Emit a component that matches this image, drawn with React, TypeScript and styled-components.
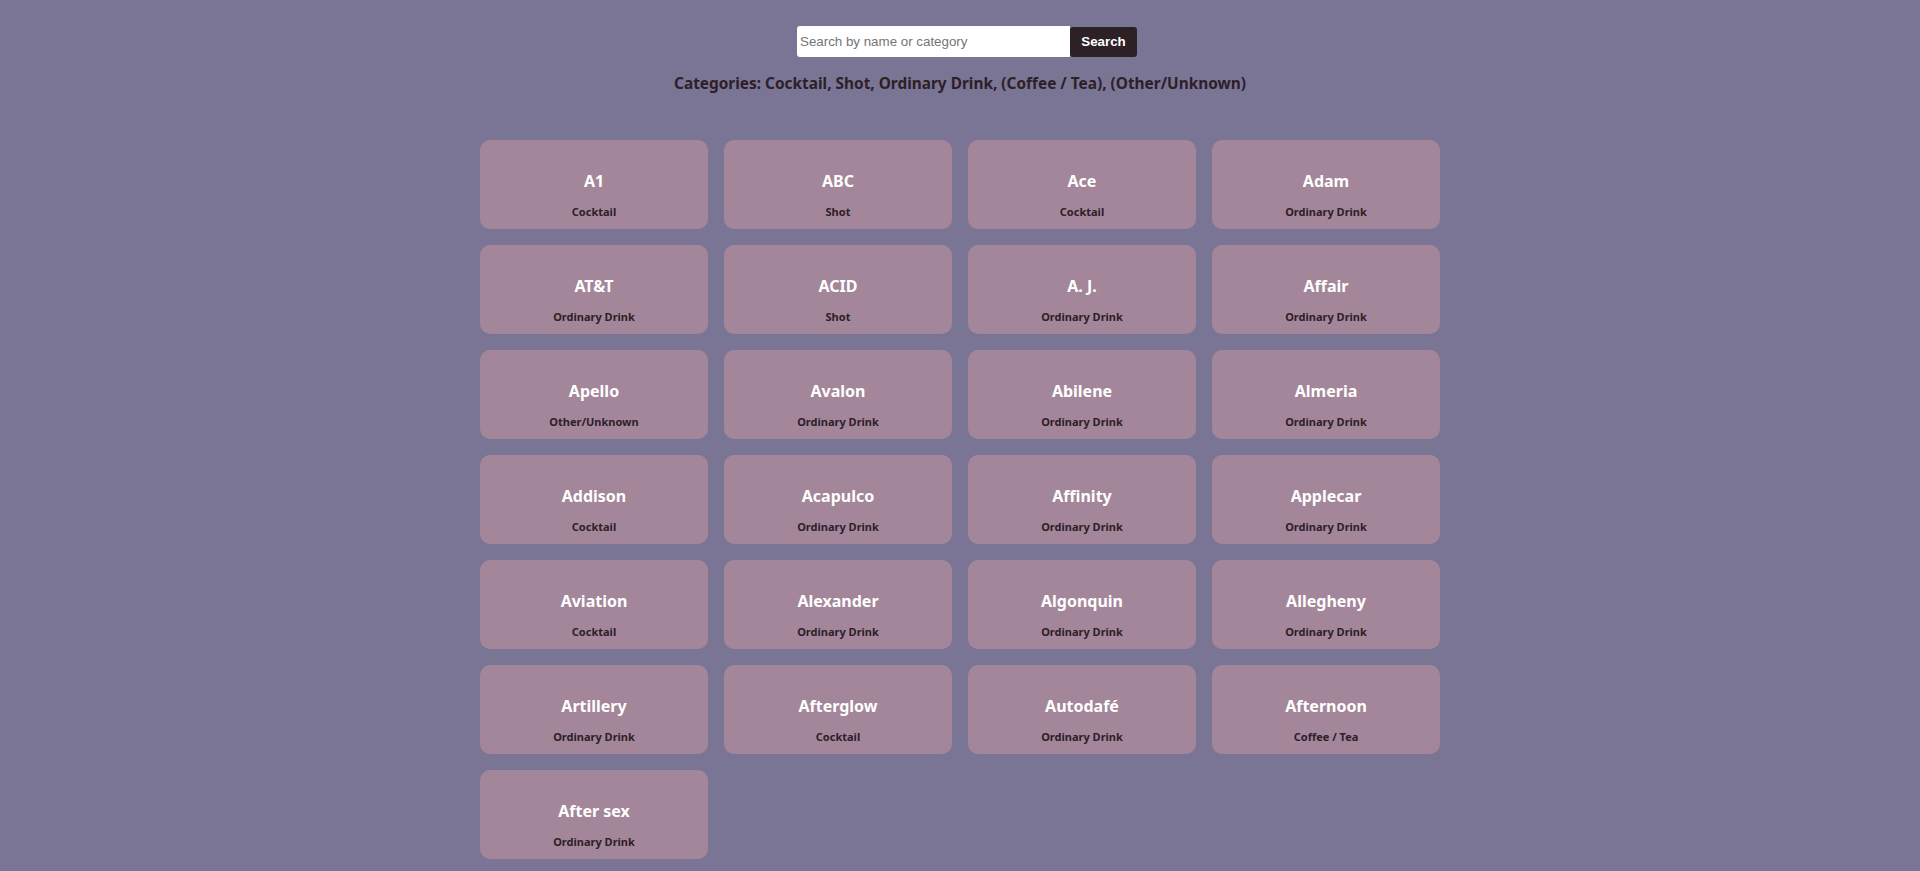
import React from "react";
import styled, { createGlobalStyle } from "styled-components";

const Global = createGlobalStyle`
  html, body { margin: 0; padding: 0; background: #7a7594; }
  body { font-family: "Noto Sans", "Open Sans", sans-serif; }
`;

const Page = styled.div`
  min-height: 871px;
  background: #7a7594;
  display: flex;
  flex-direction: column;
  align-items: center;
  padding-top: 26px;
  box-sizing: border-box;
`;

const SearchForm = styled.form`
  display: flex;
  align-items: center;
  margin-left: 14px;
`;

const SearchInput = styled.input`
  width: 273px;
  height: 31px;
  box-sizing: border-box;
  border: none;
  border-radius: 3px 0 0 3px;
  padding: 0 3px;
  font-family: "Liberation Sans", Arial, sans-serif;
  font-size: 13.33px;
  color: #222;
  background: #fff;
  outline: none;
  &::placeholder { color: #757575; }
`;

const SearchButton = styled.button`
  width: 67px;
  height: 30px;
  border: none;
  border-radius: 3px;
  background: #2e2126;
  color: #fff;
  font-family: "Liberation Sans", Arial, sans-serif;
  font-weight: 700;
  font-size: 13.33px;
  cursor: pointer;
`;

const Categories = styled.h2`
  margin: 16px 0 0;
  font-size: 15.4px;
  line-height: 22px;
  font-weight: 700;
  color: #2d2028;
`;

const Grid = styled.div`
  margin-top: 45px;
  width: 960px;
  display: grid;
  grid-template-columns: repeat(4, 228px);
  column-gap: 16px;
  row-gap: 16px;
  padding-bottom: 20px;
`;

const Card = styled.div`
  background: #a38699;
  border-radius: 10px;
  padding: 30px 10px 9px;
  height: 89px;
  box-sizing: border-box;
  display: flex;
  flex-direction: column;
  align-items: center;
`;

const Name = styled.h3`
  margin: 0 0 12px;
  font-size: 16px;
  line-height: 22px;
  font-weight: 700;
  color: #ffffff;
`;

const Category = styled.p`
  margin: 0;
  font-size: 11px;
  line-height: 16px;
  font-weight: 700;
  color: #2d2028;
`;

const drinks: [string, string][] = [
  ["A1", "Cocktail"],
  ["ABC", "Shot"],
  ["Ace", "Cocktail"],
  ["Adam", "Ordinary Drink"],
  ["AT&T", "Ordinary Drink"],
  ["ACID", "Shot"],
  ["A. J.", "Ordinary Drink"],
  ["Affair", "Ordinary Drink"],
  ["Apello", "Other/Unknown"],
  ["Avalon", "Ordinary Drink"],
  ["Abilene", "Ordinary Drink"],
  ["Almeria", "Ordinary Drink"],
  ["Addison", "Cocktail"],
  ["Acapulco", "Ordinary Drink"],
  ["Affinity", "Ordinary Drink"],
  ["Applecar", "Ordinary Drink"],
  ["Aviation", "Cocktail"],
  ["Alexander", "Ordinary Drink"],
  ["Algonquin", "Ordinary Drink"],
  ["Allegheny", "Ordinary Drink"],
  ["Artillery", "Ordinary Drink"],
  ["Afterglow", "Cocktail"],
  ["Autodafé", "Ordinary Drink"],
  ["Afternoon", "Coffee / Tea"],
  ["After sex", "Ordinary Drink"],
];

export default function App() {
  return (
    <>
      <Global />
      <Page>
        <SearchForm onSubmit={(e) => e.preventDefault()}>
          <SearchInput placeholder="Search by name or category" />
          <SearchButton type="submit">Search</SearchButton>
        </SearchForm>
        <Categories>
          Categories: Cocktail, Shot, Ordinary Drink, (Coffee / Tea), (Other/Unknown)
        </Categories>
        <Grid>
          {drinks.map(([name, cat]) => (
            <Card key={name}>
              <Name>{name}</Name>
              <Category>{cat}</Category>
            </Card>
          ))}
        </Grid>
      </Page>
    </>
  );
}
